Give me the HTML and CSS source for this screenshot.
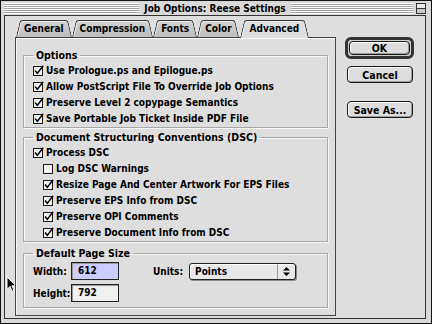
FILE: index.html
```html
<!DOCTYPE html>
<html lang="en">
<head>
    <meta charset="UTF-8">
    <meta name="viewport" content="width=device-width, initial-scale=1.0">
    <title>Job Options: Reese Settings</title>
    <link rel="stylesheet" href="styles.css">
</head>
<body>
    <svg class="defs" width="0" height="0">
        <symbol id="box-on" viewBox="0 0 11 11">
            <rect x="0.5" y="1.5" width="9" height="9" fill="#f2f2f2" stroke="#1a1a1a"/>
            <path d="M2 5.5 L4.3 8.3 L10.2 0.8" fill="none" stroke="#000" stroke-width="1.5"/>
        </symbol>
        <symbol id="box-off" viewBox="0 0 11 11">
            <rect x="0.5" y="1.5" width="9" height="9" fill="#f2f2f2" stroke="#1a1a1a"/>
        </symbol>
    </svg>

    <div class="window">
        <div class="titlebar">
            <div class="stripes"></div>
            <div class="title">Job Options: Reese Settings</div>
            <div class="title-right">
                <div class="stripes"></div>
                <div class="shade-box"></div>
            </div>
        </div>

        <div class="frame">
            <div class="tab-area">
                <div class="tabs">
                    <div class="tab">General</div>
                    <div class="tab">Compression</div>
                    <div class="tab">Fonts</div>
                    <div class="tab">Color</div>
                    <div class="tab active">Advanced</div>
                </div>
                <div class="panel">
                    <fieldset class="group">
                        <legend>Options</legend>
                        <div class="check"><svg><use href="#box-on"/></svg>Use Prologue.ps and Epilogue.ps</div>
                        <div class="check"><svg><use href="#box-on"/></svg>Allow PostScript File To Override Job Options</div>
                        <div class="check"><svg><use href="#box-on"/></svg>Preserve Level 2 copypage Semantics</div>
                        <div class="check"><svg><use href="#box-on"/></svg>Save Portable Job Ticket Inside PDF File</div>
                    </fieldset>

                    <fieldset class="group dsc">
                        <legend>Document Structuring Conventions (DSC)</legend>
                        <div class="check"><svg><use href="#box-on"/></svg>Process DSC</div>
                        <div class="check sub"><svg><use href="#box-off"/></svg>Log DSC Warnings</div>
                        <div class="check sub"><svg><use href="#box-on"/></svg>Resize Page And Center Artwork For EPS Files</div>
                        <div class="check sub"><svg><use href="#box-on"/></svg>Preserve EPS Info from DSC</div>
                        <div class="check sub"><svg><use href="#box-on"/></svg>Preserve OPI Comments</div>
                        <div class="check sub"><svg><use href="#box-on"/></svg>Preserve Document Info from DSC</div>
                    </fieldset>

                    <fieldset class="group page-size">
                        <legend>Default Page Size</legend>
                        <div class="size-row">
                            <span class="lbl">Width:</span>
                            <div class="field focused">612</div>
                            <span class="units-lbl">Units:</span>
                            <div class="popup">
                                <span class="popup-text">Points</span>
                                <span class="popup-arrows">
                                    <svg width="7" height="9" viewBox="0 0 7 9">
                                        <path d="M3.5 0 L7 3.5 L0 3.5 Z M0 5.5 L7 5.5 L3.5 9 Z" fill="#000"/>
                                    </svg>
                                </span>
                            </div>
                        </div>
                        <div class="size-row">
                            <span class="lbl">Height:</span>
                            <div class="field">792</div>
                        </div>
                    </fieldset>
                </div>
            </div>

            <div class="buttons">
                <div class="default-ring"><button class="btn">OK</button></div>
                <button class="btn">Cancel</button>
                <button class="btn save">Save As...</button>
            </div>
        </div>

        <svg class="cursor" width="11" height="17" viewBox="0 0 11 17">
            <path d="M1 1 L1 13.5 L4 10.5 L6.2 15.2 L8 14.4 L5.9 9.8 L10 9.8 Z" fill="#000" stroke="#fff" stroke-width="1"/>
        </svg>
    </div>
</body>
</html>
```

FILE: styles.css
```css
body {
    margin: 0;
    padding: 0;
    background-color: #d8d8d8;
    font-family: "DejaVu Sans Condensed", "Liberation Sans", sans-serif;
    font-stretch: condensed;
    font-weight: bold;
    font-size: 10px;
    color: #000000;
}
.defs {
    position: absolute;
}
.window {
    position: relative;
    width: 432px;
    height: 324px;
    box-sizing: border-box;
    border: 1px solid #111111;
    background-color: #d9d9d9;
    padding: 0 5px 4px 3px;
    display: flex;
    flex-direction: column;
}
.titlebar {
    height: 14px;
    display: grid;
    grid-template-columns: 1fr auto 1fr;
    align-items: center;
}
.stripes {
    height: 11px;
    background: repeating-linear-gradient(#ffffff 0 1px, #a0a0a0 1px 2px);
}
.title {
    padding: 0 5px;
    font-size: 10px;
    line-height: 15px;
}
.title-right {
    display: flex;
    align-items: center;
}
.title-right .stripes {
    flex: 1;
    margin-right: 3px;
}
.shade-box {
    width: 10px;
    height: 11px;
    box-sizing: border-box;
    border: 1px solid #333333;
    background: linear-gradient(#e8e8e8 0 4px, #333333 4px 5px, #c8c8c8 5px);
}
.frame {
    flex: 1;
    display: flex;
    border: 1px solid #333333;
    background-color: #dedede;
    padding: 4px 0 2px 10px;
}
.tab-area {
    width: 321px;
    display: flex;
    flex-direction: column;
}
.tabs {
    display: flex;
    height: 17px;
    padding-left: 1px;
}
.tab {
    position: relative;
    z-index: 1;
    height: 17px;
    line-height: 18px;
    padding: 0 8px;
}
.tab::before,
.tab::after {
    content: '';
    position: absolute;
    top: 0;
    bottom: 0;
    z-index: -1;
    background: linear-gradient(#d2d2d2, #bdbdbd);
    border-top: 1px solid #333333;
    transform-origin: bottom;
}
.tab::before {
    left: 0;
    right: 45%;
    border-left: 1px solid #333333;
    border-top-left-radius: 3px;
    box-shadow: inset 1px 1px 0 #eeeeee;
    transform: skewX(-13deg);
    transform-origin: bottom left;
}
.tab::after {
    left: 45%;
    right: 0;
    border-right: 1px solid #333333;
    border-top-right-radius: 3px;
    box-shadow: inset 0 1px 0 #eeeeee;
    transform: skewX(13deg);
    transform-origin: bottom right;
}
.tab.active {
    z-index: 3;
    height: 18px;
    margin-bottom: -1px;
    padding: 0 10px;
}
.tab.active::before,
.tab.active::after {
    background: #dedede;
}
.panel {
    position: relative;
    z-index: 2;
    flex: 1;
    border: 1px solid #444444;
    background-color: #dedede;
    box-shadow: inset 1px 1px 0 #f6f6f6;
    padding: 11px 7px 0 7px;
}
.group {
    margin: 0;
    padding: 1px 0 1px 9px;
    border: 1px solid #a8a8a8;
    box-shadow: inset 1px 1px 0 #f8f8f8, 1px 1px 0 #f8f8f8;
}
.group legend {
    padding: 0 3px;
    line-height: 12px;
    font-size: 10.5px;
}
.dsc {
    margin-top: 3px;
}
.page-size {
    margin-top: 5px;
    padding-top: 3px;
    padding-bottom: 5px;
}
.check {
    display: flex;
    align-items: center;
    gap: 2px;
    height: 16px;
    white-space: nowrap;
}
.check svg {
    width: 11px;
    height: 11px;
}
.check.sub {
    padding-left: 10px;
}
.size-row {
    display: flex;
    align-items: center;
    height: 18px;
}
.size-row + .size-row {
    margin-top: 4px;
}
.lbl {
    width: 38px;
}
.field {
    width: 48px;
    height: 18px;
    box-sizing: border-box;
    border: 1px solid #222222;
    box-shadow: inset 1px 1px 0 #999999;
    background-color: #f0f0f0;
    padding-left: 6px;
    line-height: 16px;
    font-weight: bold;
}
.field.focused {
    background-color: #ccccff;
}
.units-lbl {
    margin-left: 34px;
}
.popup {
    margin-left: 6px;
    width: 107px;
    height: 17px;
    box-sizing: border-box;
    display: flex;
    border: 1px solid #222222;
    border-radius: 3px;
    background-color: #e8e8e8;
    box-shadow: 1px 1px 0 #8a8a8a, inset 1px 1px 0 #ffffff;
}
.popup-text {
    flex: 1;
    padding-left: 5px;
    line-height: 15px;
}
.popup-arrows {
    width: 17px;
    border-left: 1px solid #999999;
    display: flex;
    align-items: center;
    justify-content: center;
}
.buttons {
    margin-left: 9px;
    margin-top: 17px;
    display: flex;
    flex-direction: column;
    align-items: flex-start;
}
.default-ring {
    width: 69px;
    height: 22px;
    box-sizing: border-box;
    border: 3px solid #333333;
    border-radius: 6px;
    background-color: #cfcfcf;
    display: flex;
    align-items: center;
    justify-content: center;
}
.btn {
    width: 66px;
    height: 17px;
    box-sizing: border-box;
    border: 1px solid #1a1a1a;
    border-radius: 4px;
    background-color: #dddddd;
    box-shadow: inset 1px 1px 0 #ffffff, inset -1px -1px 0 #9a9a9a;
    font-family: inherit;
    font-stretch: inherit;
    font-weight: bold;
    font-size: 10.5px;
    color: #000000;
    padding: 0;
    margin-left: 2px;
}
.default-ring .btn {
    width: 61px;
    height: 14px;
    margin-left: 0;
    line-height: 11px;
}
.buttons > .btn {
    margin-top: 7px;
}
.buttons > .btn.save {
    margin-top: 18px;
}
.cursor {
    position: absolute;
    left: 5px;
    top: 275px;
}
```
